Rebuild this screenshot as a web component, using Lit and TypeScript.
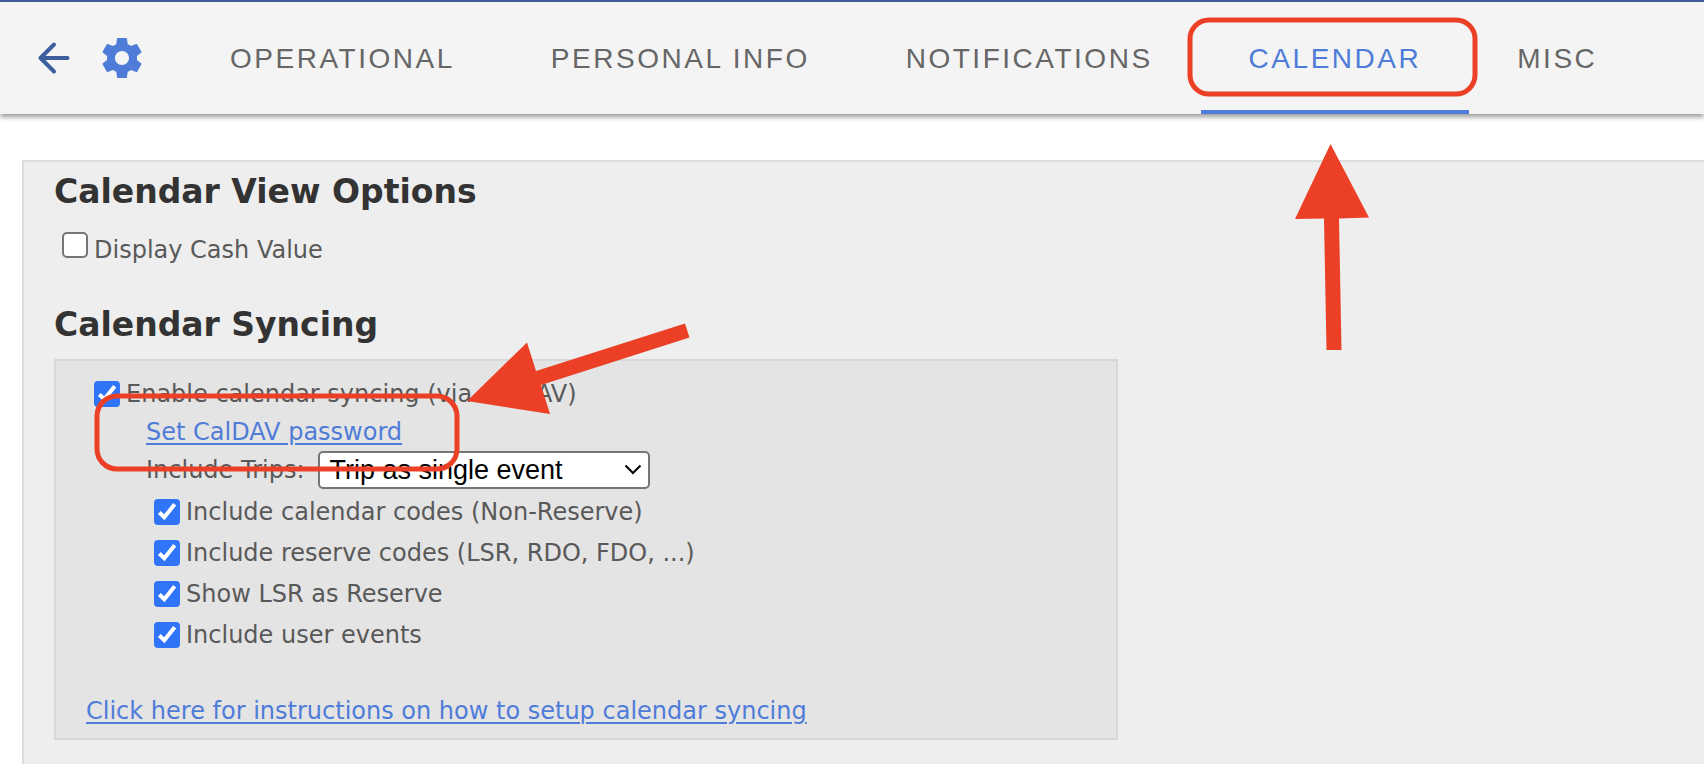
import { LitElement, html, css } from "lit";
import { customElement, property, state } from "lit/decorators.js";
import { classMap } from "lit/directives/class-map.js";

const TABS = ["Operational", "Personal Info", "Notifications", "Calendar", "Misc"];

const TRIP_MODES = ["Trip as single event", "Each leg as an event", "Do not include"];

const SYNC_OPTIONS = [
  "Include calendar codes (Non-Reserve)",
  "Include reserve codes (LSR, RDO, FDO, ...)",
  "Show LSR as Reserve",
  "Include user events",
];

@customElement("check-row")
export class CheckRow extends LitElement {
  @property() label = "";
  @property({ type: Boolean }) checked = false;
  @property({ type: Boolean }) baseline = false;

  static styles = css`
    :host {
      display: block;
    }
    .row {
      display: flex;
      align-items: center;
      gap: 6px;
      width: fit-content;
      min-height: inherit;
    }
    .baseline {
      align-items: baseline;
    }
    .box {
      appearance: none;
      flex: none;
      width: 26px;
      height: 26px;
      margin: 0;
      border: 2px solid #767676;
      border-radius: 5px;
      background: #fff;
    }
    .box:checked {
      border: 0;
      border-radius: 4px;
      background: #3074f8
        url("data:image/svg+xml,%3Csvg xmlns='http://www.w3.org/2000/svg' viewBox='0 0 26 26'%3E%3Cpath d='M5.3 13.5l5 4.7L20.700 5.200' fill='none' stroke='white' stroke-width='4'/%3E%3C/svg%3E");
    }
  `;

  render() {
    return html`
      <label class=${classMap({ row: true, baseline: this.baseline })}>
        <input class="box" type="checkbox" .checked=${this.checked} />
        <span>${this.label}</span>
      </label>
    `;
  }
}

@customElement("settings-header")
export class SettingsHeader extends LitElement {
  @state() private active = "Calendar";

  static styles = css`
    :host {
      display: block;
    }
    .bar {
      display: flex;
      align-items: stretch;
      height: 112px;
      padding-left: 34px;
      border-top: 2px solid #3e5c93;
      background: #f4f4f4;
      box-shadow: 0 3px 5px rgba(0, 0, 0, 0.4);
    }
    .icon {
      display: flex;
      align-items: center;
      padding: 0;
      border: 0;
      background: none;
    }
    .gear {
      margin: 0 36px 0 24px;
    }
    .tabs {
      display: flex;
    }
    .tab {
      padding: 2px 48px 0;
      border: 0;
      border-top: 4px solid transparent;
      border-bottom: 4px solid transparent;
      background: none;
      color: #666;
      font: 28px/32px "Liberation Sans", Arial, sans-serif;
      letter-spacing: 0.09em;
      text-transform: uppercase;
      white-space: nowrap;
    }
    .active {
      border-bottom-color: #4f7cd8;
      color: #4f7cd8;
    }
  `;

  render() {
    return html`
      <header class="bar">
        <button class="icon" aria-label="Back">
          <svg width="40" height="40" viewBox="0 0 40 40" fill="none" stroke="#3e5f9d" stroke-width="4" stroke-linecap="round" stroke-linejoin="round">
            <path d="M33.500 20H6.500M20 6.500L6.500 20L20 33.500" />
          </svg>
        </button>
        <button class="icon gear" aria-label="Settings">
          <svg width="48" height="48" viewBox="0 0 24 24" fill="#4f7cd8">
            <path d="M19.430 12.980c.04-.32.07-.64.07-.98s-.03-.66-.07-.98l2.110-1.650c.19-.15.24-.42.12-.64l-2-3.460c-.12-.22-.39-.3-.61-.22l-2.490 1c-.52-.4-1.080-.73-1.690-.98l-.38-2.650C14.460 2.180 14.250 2 14 2h-4c-.25 0-.46.18-.49.42l-.38 2.650c-.61.25-1.170.59-1.690.98l-2.490-1c-.23-.09-.49 0-.61.22l-2 3.460c-.13.22-.07.49.12.64l2.110 1.650c-.04.32-.07.65-.07.98s.03.66.07.98l-2.110 1.650c-.19.15-.24.42-.12.64l2 3.460c.12.22.39.3.61.22l2.490-1c.52.4 1.080.73 1.690.98l.38 2.650c.03.24.24.42.49.42h4c.25 0 .46-.18.49-.42l.38-2.650c.61-.25 1.170-.59 1.690-.98l2.490 1c.23.09.49 0 .61-.22l2-3.460c.12-.22.07-.49-.12-.64l-2.110-1.650zM12 15.500c-1.930 0-3.500-1.570-3.500-3.500s1.570-3.500 3.500-3.500 3.500 1.570 3.500 3.500-1.570 3.500-3.500 3.500z" />
          </svg>
        </button>
        <nav class="tabs">
          ${TABS.map(
            (tab) => html`
              <button
                class=${classMap({ tab: true, active: tab === this.active })}
                @click=${() => (this.active = tab)}
              >${tab}</button>
            `
          )}
        </nav>
      </header>
    `;
  }
}

@customElement("app-root")
export class AppRoot extends LitElement {
  static styles = css`
    :host {
      display: block;
      position: relative;
      min-height: 100vh;
      overflow: hidden;
      background: #fff;
      color: #595959;
      font: 24px/38px Verdana, "DejaVu Sans", sans-serif;
    }
    .page {
      display: flex;
      flex-direction: column;
      min-height: 100vh;
    }
    .panel {
      flex: 1;
      margin: 46px 0 0 22px;
      padding: 8px 30px 24px;
      border: solid #ddd;
      border-width: 2px 0 0 2px;
      background: #eee;
    }
    .title {
      margin: 0;
      color: #333;
      font-size: 33px;
      line-height: 44px;
    }
    .view {
      min-height: 38px;
      margin: 17px 0 34px 8px;
    }
    .sync {
      box-sizing: border-box;
      width: 1064px;
      max-width: 100%;
      margin-top: 12px;
      padding: 14px 30px 8px;
      border: 2px solid #d8d8d8;
      background: #e4e4e4;
    }
    .enable {
      min-height: 38px;
      margin-left: 8px;
    }
    .details {
      margin: 0 0 37px 60px;
    }
    .trips {
      display: flex;
      align-items: center;
      gap: 14px;
    }
    .select {
      appearance: none;
      width: 332px;
      height: 38px;
      padding: 0 40px 0 9px;
      border: 2px solid #767676;
      border-radius: 5px;
      background: #fff
        url("data:image/svg+xml,%3Csvg xmlns='http://www.w3.org/2000/svg' width='18' height='12'%3E%3Cpath d='M1.500 1.500L9 9L16.500 1.500' fill='none' stroke='black' stroke-width='2'/%3E%3C/svg%3E")
        no-repeat right 6px center;
      color: #000;
      font: 27px/32px "Liberation Sans", Arial, sans-serif;
    }
    .options {
      margin: 2px 0 0 8px;
    }
    .option {
      min-height: 41px;
    }
    .link {
      display: block;
      width: fit-content;
      color: #4f7cd8;
      text-decoration-thickness: 2px;
      text-underline-offset: 3px;
    }
    .marks {
      position: absolute;
      top: 0;
      left: 0;
      pointer-events: none;
    }
  `;

  render() {
    return html`
      <div class="page">
        <settings-header></settings-header>
        <main class="panel">
          <h2 class="title">Calendar View Options</h2>
          <check-row class="view" label="Display Cash Value" baseline></check-row>
          <h2 class="title">Calendar Syncing</h2>
          <section class="sync">
            <check-row class="enable" label="Enable calendar syncing (via CalDAV)" checked></check-row>
            <div class="details">
              <a class="link" href="#password">Set CalDAV password</a>
              <div class="trips">
                <label for="trips">Include Trips:</label>
                <select class="select" id="trips">
                  ${TRIP_MODES.map((mode) => html`<option>${mode}</option>`)}
                </select>
              </div>
              <div class="options">
                ${SYNC_OPTIONS.map(
                  (label) => html`<check-row class="option" label=${label} checked></check-row>`
                )}
              </div>
            </div>
            <a class="link" href="#instructions">Click here for instructions on how to setup calendar syncing</a>
          </section>
        </main>
      </div>
      <svg class="marks" width="1500" height="500" fill="none" aria-hidden="true">
        <g stroke="#eb4026" stroke-width="5">
          <rect x="1190" y="20" width="285" height="74" rx="19" />
          <rect x="97" y="396" width="360" height="73" rx="20" />
        </g>
        <g fill="#eb4026">
          <path d="M1330.500 144L1295 219L1324 218.500L1326.500 350H1341.500L1339 218.500L1369 217.500Z" />
          <path d="M467 401L527 342.500L536 371L685 323.500L689.500 337.500L541 385L550 414Z" />
        </g>
      </svg>
    `;
  }
}
